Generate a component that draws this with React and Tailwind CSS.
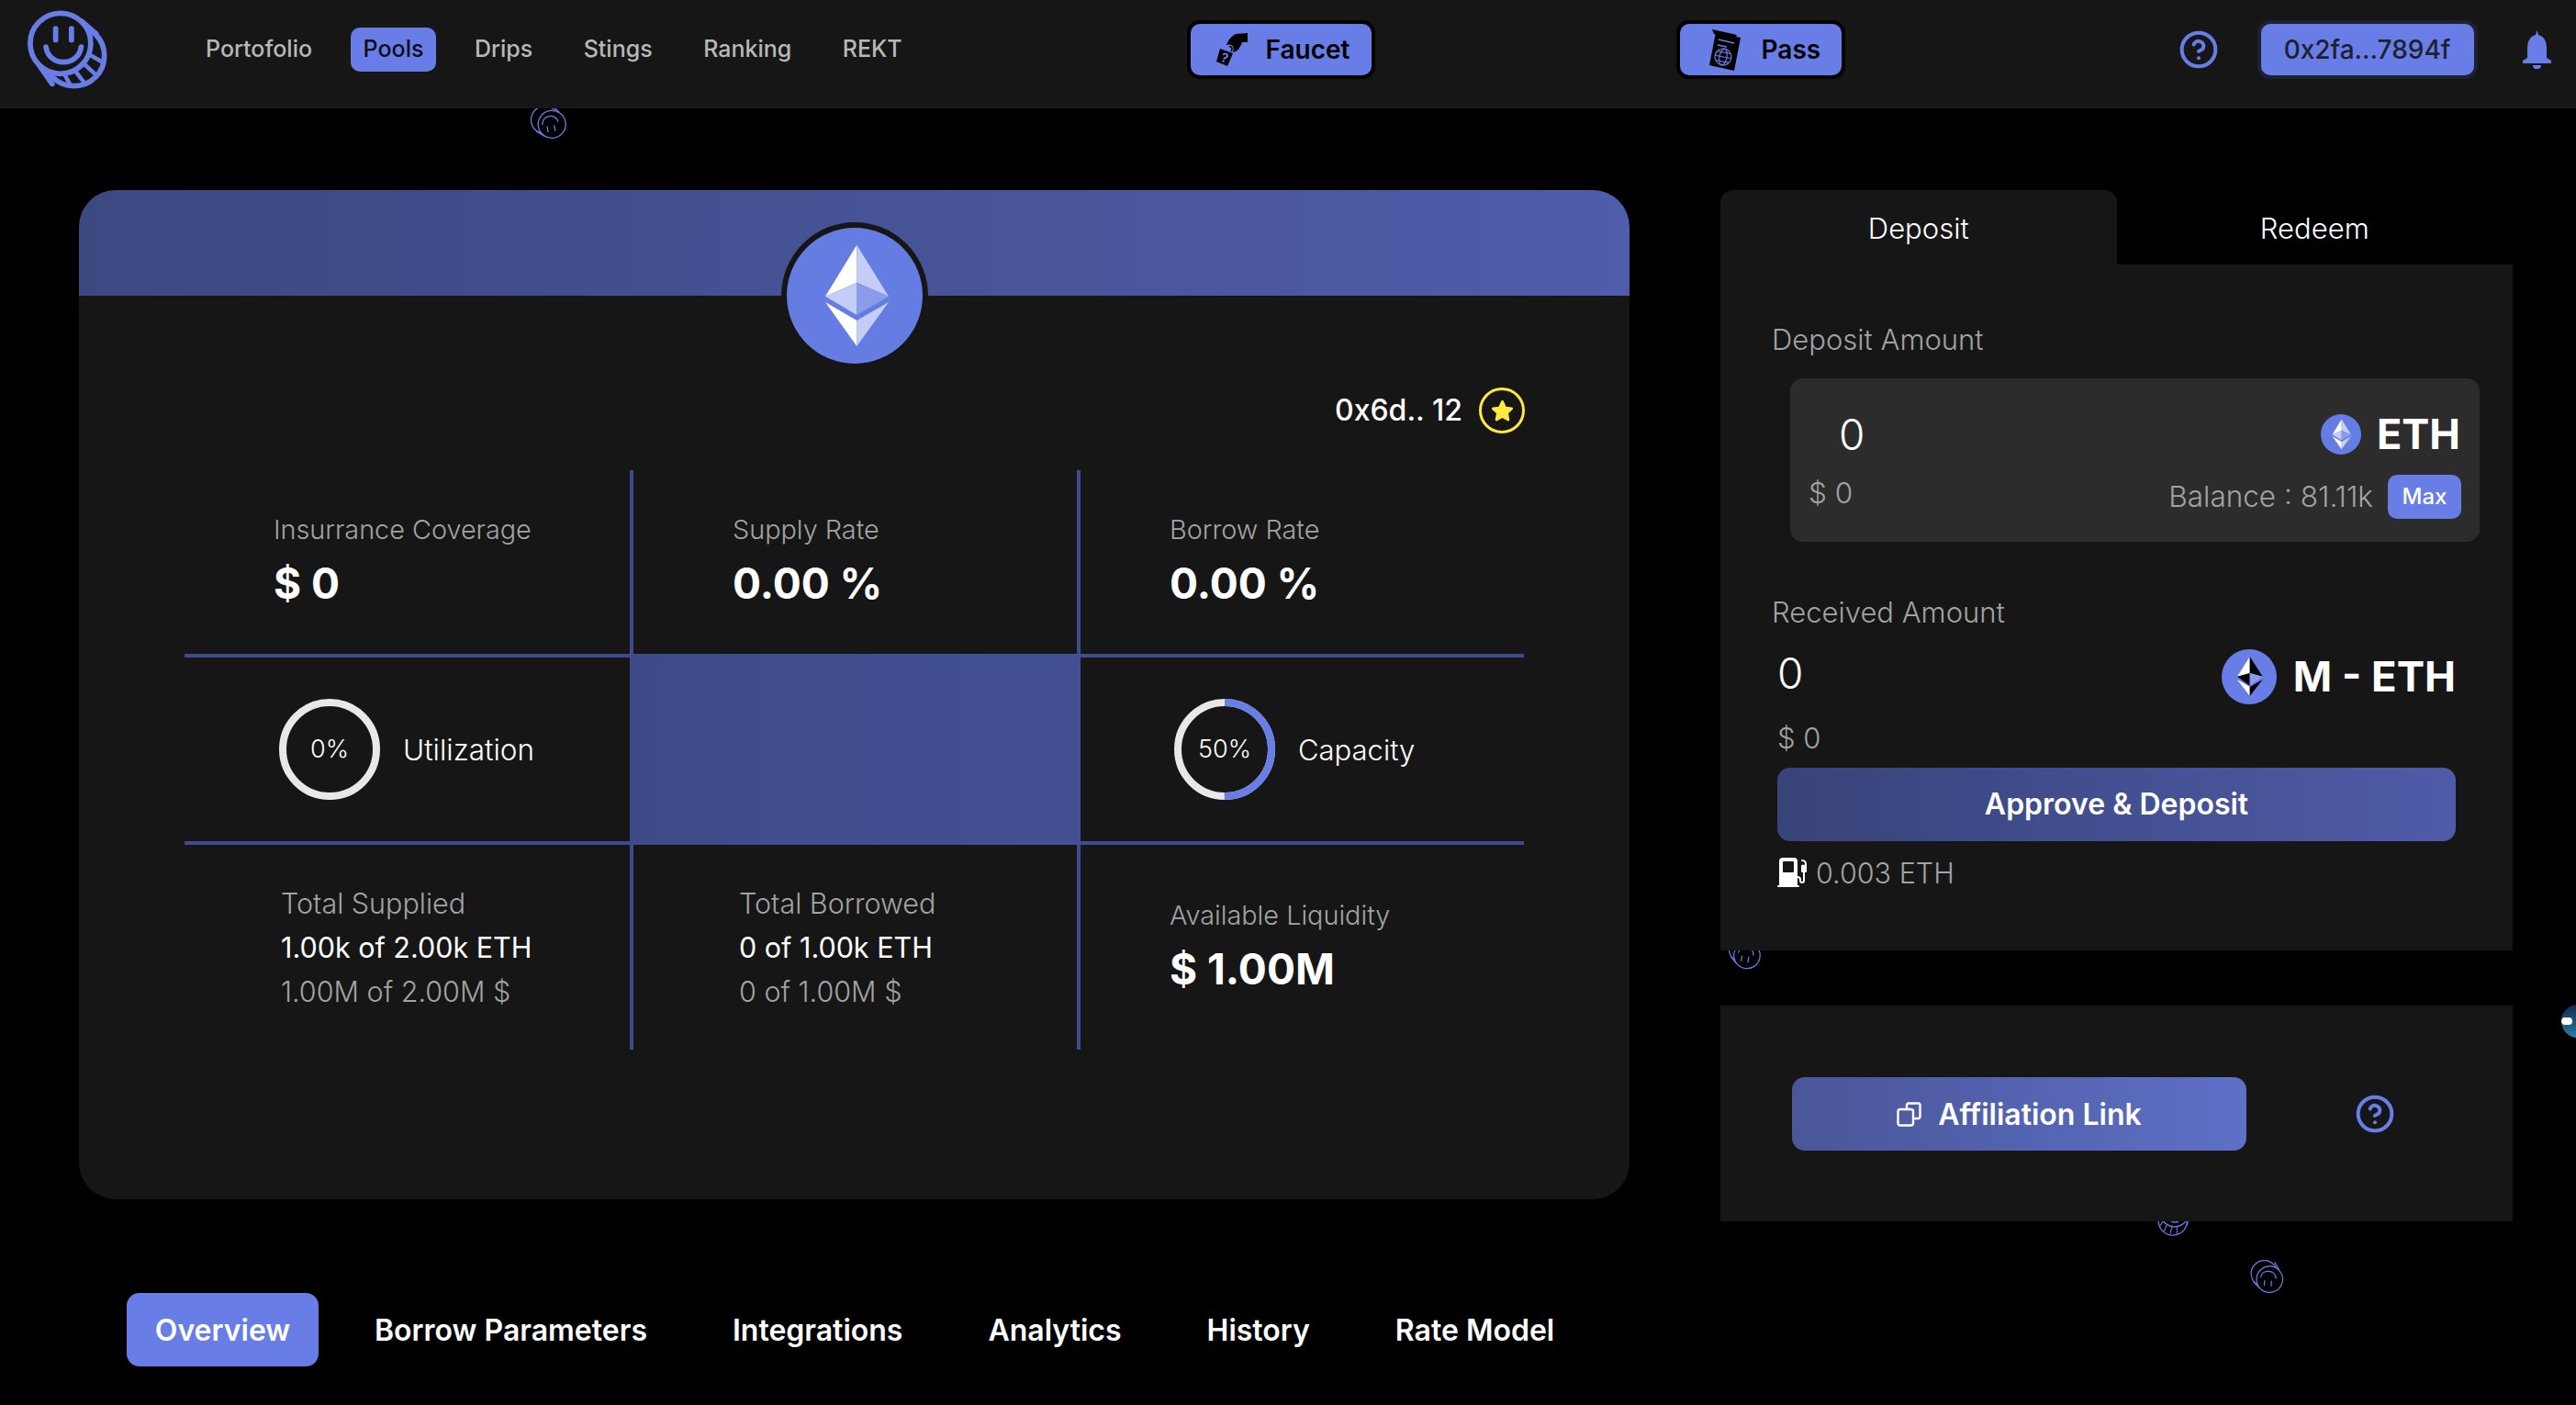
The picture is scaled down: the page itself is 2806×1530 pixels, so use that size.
import React from 'react';
import { CircleHelp } from 'lucide-react';
import { BsFuelPumpFill } from 'react-icons/bs';

const navLinks = ['Portofolio', 'Pools', 'Drips', 'Stings', 'Ranking', 'REKT'];
const tabs = ['Overview', 'Borrow Parameters', 'Integrations', 'Analytics', 'History', 'Rate Model'];

const CoinLogo = ({ className, bg = '#161616', sw = 6, ribs = true }) => (
  <svg viewBox="28 8 92 92" className={className} fill="none" stroke="#687de5" strokeWidth={sw} strokeLinecap="round">
    <circle cx="81" cy="61" r="34.5" fill={bg} />
    <path d="M90 22 L106 36 M42 73 L56 93" />
    {ribs && <path d="M99 60 L113 68 M92 70 L104 81 M82 78 L92 91 M70 82 L77 95" strokeWidth={sw * 0.8} />}
    <circle cx="65.5" cy="47" r="34.5" fill={bg} />
    <path d="M60 30 V43 M78 30 V43" />
    <path d="M49 51 C52 74 86 74 89 51" />
  </svg>
);

const EthIcon = ({ className }) => (
  <svg viewBox="0 0 148 148" className={className}>
    <circle cx="74" cy="74" r="74" fill="#657de3" />
    <polygon points="76.3,18.7 42,74.7 76.3,59.7" fill="#fff" />
    <polygon points="76.3,18.7 111,74.7 76.3,59.7" fill="#c4cdf5" />
    <polygon points="42,74.7 76.3,59.7 76.3,95" fill="#c4cdf5" />
    <polygon points="111,74.7 76.3,59.7 76.3,95" fill="#8b9bec" />
    <polygon points="42,81 76.3,101 76.3,129" fill="#fff" />
    <polygon points="111,81 76.3,101 76.3,129" fill="#c4cdf5" />
  </svg>
);

const MEthIcon = ({ className }) => (
  <svg viewBox="0 0 60 60" className={className}>
    <circle cx="30" cy="30" r="30" fill="#687de5" />
    <polygon points="30.7,8 17,29.7 30.7,26" fill="#fff" />
    <polygon points="30.7,8 44.7,29.7 30.7,26" fill="#000" />
    <polygon points="17,29.7 30.7,26 30.7,39.7" fill="#000" />
    <polygon points="44.7,29.7 30.7,26 30.7,39.7" fill="#8b9bec" />
    <polygon points="17,33 30.7,41 30.7,51" fill="#fff" />
    <polygon points="44.7,33 30.7,41 30.7,51" fill="#000" />
  </svg>
);

const FaucetIcon = () => (
  <svg viewBox="0 0 34 36" className="w-[34px] h-[36px]">
    <path d="M21 1 L34 0 L34 10 L28 10 C26 16 23 20 18 21 C20 15 18 11 11 13 C13 7 17 3 21 1Z" fill="#000" />
    <path d="M14 15 C17 14 18 17 16 20" fill="none" stroke="#000" strokeWidth="1.5" />
    <polygon points="4,17 18,22 12,36 0,31" fill="#000" />
    <text x="5" y="32" fontSize="14" fontWeight="700" fill="#687de5" fontFamily="Inter, sans-serif" transform="rotate(18 9 27)">?</text>
  </svg>
);

const PassIcon = () => (
  <svg viewBox="0 0 34 45" className="w-[34px] h-[45px]">
    <polygon points="3,0 30,6 28,10 5,5" fill="#000" />
    <polygon points="7,3 34,9 27,45 0,39" fill="#000" />
    <path d="M10 11 L27 15 M9 17 L19 19" stroke="#687de5" strokeWidth="1.5" />
    <g fill="none" stroke="#687de5" strokeWidth="1.2" transform="rotate(11 15 30)">
      <circle cx="15" cy="30" r="9" />
      <ellipse cx="15" cy="30" rx="4" ry="9" />
      <path d="M6 30 H24 M7.5 25 H22.5 M7.5 35 H22.5" />
    </g>
  </svg>
);

const BellIcon = () => (
  <svg viewBox="0 0 31 42" className="w-[31px] h-[42px] ml-[49px]" fill="#687de5">
    <path d="M15.5 0 L17 5 C23 6.5 26 12 26 19 V30 L31 33 V36 H0 V33 L5 30 V19 C5 12 8 6.5 14 5Z" />
    <path d="M11 38 H20 C20 44 11 44 11 38Z" />
  </svg>
);

const CopyIcon = () => (
  <svg viewBox="0 0 27 27" className="w-[27px] h-[27px]" fill="none" stroke="#fff" strokeWidth="2.4">
    <path d="M11 8 V3 A2 2 0 0 1 13 1.5 H24 A2 2 0 0 1 25.5 3 V16 A2 2 0 0 1 24 18 H18" />
    <rect x="1.5" y="8" width="16.5" height="17.5" rx="2.5" />
  </svg>
);

const Ring = ({ label, blue }) => (
  <div className="relative w-[110px] h-[110px] shrink-0">
    <svg viewBox="0 0 110 110" className="w-full h-full -rotate-90" fill="none" strokeWidth="8">
      <circle cx="55" cy="55" r="51" stroke="#e8e8e8" />
      {blue && <circle cx="55" cy="55" r="51" stroke="#687de5" strokeDasharray="160.2 320.4" />}
    </svg>
    <span className="absolute inset-0 flex items-center justify-center text-[27px] font-light text-white">{label}</span>
  </div>
);

const Metric = ({ label, value, className }) => (
  <div className={className}>
    <div className="text-[28.8px] leading-[36px] font-light text-[#a3a3a3]">{label}</div>
    <div className="mt-[11px] text-[46px] leading-[58px] font-bold text-white">{value}</div>
  </div>
);

const Totals = ({ label, line1, line2, className }) => (
  <div className={`text-[30.5px] leading-[48px] font-light ${className}`}>
    <div className="text-[#a3a3a3]">{label}</div>
    <div className="text-white font-normal">{line1}</div>
    <div className="text-[#a3a3a3]">{line2}</div>
  </div>
);

const NavButton = ({ icon, label, gap, className }) => (
  <button className={`flex items-center h-[64px] rounded-[14px] border-4 border-black bg-[#687de5] font-semibold text-[28px] text-black ${gap} ${className}`}>
    {icon}
    {label}
  </button>
);

export default function App() {
  return (
    <div className="relative h-[1530px] overflow-hidden bg-black font-['Inter',sans-serif]">
      <CoinLogo bg="#000" sw={3} ribs={false} className="absolute left-[577px] top-[112px] w-[40px] h-[42px] rotate-[170deg]" />
      <CoinLogo bg="#000" sw={3} ribs={false} className="absolute left-[1881px] top-[1018px] w-[38px] h-[38px] rotate-[190deg]" />
      <CoinLogo bg="#000" sw={3} className="absolute left-[2347px] top-[1304px] w-[42px] h-[42px] rotate-[60deg]" />
      <CoinLogo bg="#000" sw={3} ribs={false} className="absolute left-[2450px] top-[1371px] w-[38px] h-[38px] rotate-[185deg]" />
      <div className="absolute left-[2790px] top-[1094px] w-[36px] h-[36px] rounded-full overflow-hidden bg-linear-to-b from-[#12294f] to-[#2b7ea8]">
        <div className="mt-[14px] w-[12px] h-[8px] rounded-full bg-white" />
      </div>

      <header className="relative z-10 flex items-center h-[118px] bg-[#161616] pl-[30px] pb-[10px]">
        <CoinLogo className="w-[88px] h-[90px] shrink-0" />
        <nav className="flex gap-[27.5px] ml-[92px] text-[25px] font-medium text-[#b8b8b8]">
          {navLinks.map((link) => (
            <a key={link} className={`flex items-center h-[48px] px-[14px] rounded-[10px] ${link === 'Pools' ? 'bg-[#687de5] text-[#0d0d1a]' : ''}`}>
              {link}
            </a>
          ))}
        </nav>
        <NavButton icon={<FaucetIcon />} label="Faucet" gap="gap-[20px] pl-[28px] w-[205px]" className="ml-[296px]" />
        <NavButton icon={<PassIcon />} label="Pass" gap="gap-[23px] pl-[32px] w-[184px]" className="ml-[328px]" />
        <CircleHelp size={44} color="#687de5" strokeWidth={2.2} className="ml-[363px] shrink-0" />
        <button className="ml-[42px] w-[240px] h-[64px] rounded-[14px] border-4 border-[#1e2130] bg-[#687de5] text-[28px] font-medium text-[#1e2130]">
          0x2fa...7894f
        </button>
        <BellIcon />
      </header>

      <main className="relative z-10 flex items-start pl-[86px] pt-[89px]">
        <div className="w-[1689px] shrink-0">
          <section className="relative rounded-[40px] overflow-hidden bg-[#161616]">
            <div className="h-[115px] bg-linear-to-r from-[#3c4880] to-[#4f5dab]" />
            <div className="absolute left-[765px] top-[35px] w-[160px] h-[160px] rounded-full border-[6px] border-[#161616] bg-[#161616]">
              <EthIcon className="w-[148px] h-[148px]" />
            </div>

            <div className="flex items-center justify-end gap-[18px] pt-[100px] pr-[114px] text-[32px] font-medium text-white">
              0x6d.. 12
              <span className="flex items-center justify-center w-[50px] h-[50px] rounded-full border-[3px] border-[#fde93f]">
                <svg viewBox="0 0 24 24" className="w-[27px] h-[27px]" fill="#fde93f" stroke="#fde93f" strokeWidth="2.5" strokeLinejoin="round">
                  <polygon points="12,3 14.8,9 21,9.7 16.4,14 17.7,20.5 12,17.3 6.3,20.5 7.6,14 3,9.7 9.2,9" />
                </svg>
              </span>
            </div>

            <div className="grid grid-cols-[485px_491px_483px] grid-rows-[200px_208px_223px] ml-[115px] mt-[40px] mb-[163px]">
              <Metric label="Insurrance Coverage" value="$ 0" className="pl-[97px] pt-[47px]" />
              <Metric label="Supply Rate" value="0.00 %" className="pl-[108px] pt-[47px] border-x-4 border-[#3f4b8a]" />
              <Metric label="Borrow Rate" value="0.00 %" className="pl-[97px] pt-[47px]" />

              <div className="flex items-center gap-[25px] pl-[103px] border-y-4 border-[#3f4b8a]">
                <Ring label="0%" />
                <span className="pt-[2px] text-[31.5px] font-light text-white">Utilization</span>
              </div>
              <div className="bg-linear-to-r from-[#3f4b88] to-[#435094]" />
              <div className="flex items-center gap-[25px] pl-[102px] border-y-4 border-[#3f4b8a]">
                <Ring label="50%" blue />
                <span className="pt-[2px] text-[31px] font-light text-white">Capacity</span>
              </div>

              <Totals label="Total Supplied" line1="1.00k of 2.00k ETH" line2="1.00M of 2.00M $" className="pl-[105px] pt-[40px]" />
              <Totals label="Total Borrowed" line1="0 of 1.00k ETH" line2="0 of 1.00M $" className="pl-[115px] pt-[40px] border-x-4 border-[#3f4b8a]" />
              <Metric label="Available Liquidity" value="$ 1.00M" className="pl-[97px] pt-[59px]" />
            </div>
          </section>

          <div className="flex gap-[29px] mt-[102px] ml-[52px] text-[32px] font-semibold text-white">
            {tabs.map((tab) => (
              <a key={tab} className={`flex items-center justify-center h-[80px] pt-[2px] rounded-[14px] ${tab === 'Overview' ? 'w-[209px] bg-[#687de5]' : 'px-[32px]'}`}>
                {tab}
              </a>
            ))}
          </div>
        </div>

        <div className="w-[863px] ml-[99px] shrink-0">
          <div className="flex h-[81px] text-[31px] font-light text-white">
            <div className="flex flex-1 items-center justify-center pt-[4px] rounded-t-[14px] bg-[#161616]">Deposit</div>
            <div className="flex flex-1 items-center justify-center pt-[4px]">Redeem</div>
          </div>
          <section className="h-[747px] bg-[#161616] pt-[62px]">
            <div className="pl-[56px] text-[31px] leading-[40px] font-light text-[#a3a3a3]">Deposit Amount</div>
            <div className="ml-[76px] mt-[22px] w-[751px] h-[178px] rounded-[14px] bg-[#2c2c2c] pt-[37px]">
              <div className="flex items-center justify-between h-[48px] pl-[53px] pr-[21px]">
                <span className="text-[46px] font-light text-white">0</span>
                <span className="flex items-center gap-[17px] text-[45px] font-bold text-white">
                  <EthIcon className="w-[44px] h-[44px]" />
                  ETH
                </span>
              </div>
              <div className="flex items-center justify-between h-[48px] mt-[20px] pl-[20px] pr-[20px] text-[31.5px] font-light text-[#a3a3a3]">
                <span className="-mt-[8px]">$ 0</span>
                <span className="flex items-center gap-[16px]">
                  Balance : 81.11k
                  <button className="w-[80px] h-[48px] rounded-[10px] bg-[#687de5] text-[24px] font-medium text-white">Max</button>
                </span>
              </div>
            </div>

            <div className="mt-[57px] pl-[56px] text-[31px] leading-[40px] font-light text-[#a3a3a3]">Received Amount</div>
            <div className="flex items-center justify-between h-[60px] mt-[20px] pl-[62px] pr-[62px]">
              <span className="-mt-[8px] text-[46px] font-light text-white">0</span>
              <span className="flex items-center gap-[18px] text-[45.5px] font-bold text-white">
                <MEthIcon className="w-[60px] h-[60px]" />
                M - ETH
              </span>
            </div>
            <div className="mt-[16px] pl-[62px] pt-[1px] h-[40px] text-[31px] leading-[40px] font-light text-[#a3a3a3]">$ 0</div>
            <button className="block ml-[62px] mt-[13px] w-[739px] h-[80px] rounded-[14px] bg-linear-to-r from-[#38437a] to-[#4e5ca8] text-[32px] font-semibold text-white">
              Approve &amp; Deposit
            </button>
            <div className="flex items-center gap-[10px] mt-[18px] pl-[62px] h-[32px] text-[30.5px] font-light text-[#a3a3a3]">
              <BsFuelPumpFill size={32} color="#fff" />
              <span className="pt-[2px]">0.003 ETH</span>
            </div>
          </section>

          <section className="flex items-center h-[235px] mt-[60px] bg-[#161616] pl-[78px]">
            <button className="flex items-center justify-center gap-[18px] w-[495px] h-[80px] pt-[2px] rounded-[14px] bg-linear-to-r from-[#4a5699] to-[#5e70c8] text-[32px] font-semibold text-white">
              <CopyIcon />
              Affiliation Link
            </button>
            <CircleHelp size={44} color="#687de5" strokeWidth={2.2} className="ml-[118px]" />
          </section>
        </div>
      </main>
    </div>
  );
}
